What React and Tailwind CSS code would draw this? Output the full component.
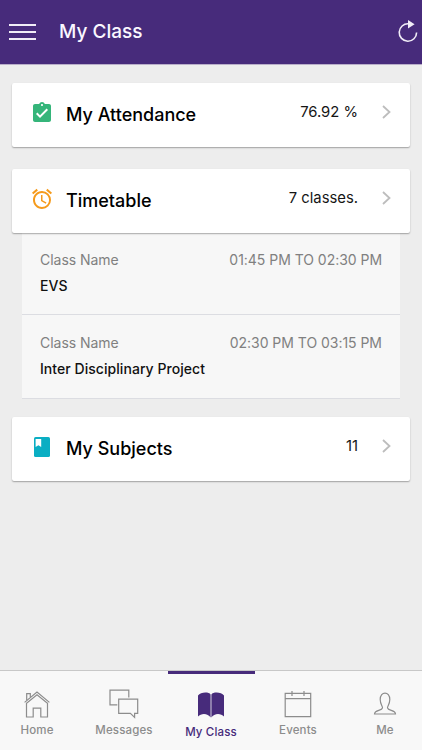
import React from "react";
import { MdAlarm, MdAssignmentTurnedIn } from "react-icons/md";

const classes = [
  { name: "EVS", time: "01:45 PM TO 02:30 PM" },
  { name: "Inter Disciplinary Project", time: "02:30 PM TO 03:15 PM" },
];

const BookIcon = () => (
  <svg className="size-6" viewBox="0 0 24 24">
    <rect x="4" y="2" width="16" height="20" rx="1.6" fill="#0aaec3" />
    <path d="M5.6 4h5.6v8l-2.8-1.8L5.6 12z" fill="#fff" />
  </svg>
);

const Chevron = () => (
  <svg
    className="ml-[23px] h-4 w-[11px]"
    viewBox="0 0 11 16"
    fill="none"
    stroke="#bdbdbd"
    strokeWidth="1.8"
  >
    <path d="M2 2l6.5 6L2 14" />
  </svg>
);

const HomeIcon = () => (
  <svg className="size-8" viewBox="0 0 32 32" fill="none" stroke="currentColor" strokeWidth="1.2">
    <path d="M5.5 15.2V29h6.7v-8.8h7.6V29h6.7V15.2L16 6.8z" />
    <path d="M3.6 14.4L16 4l12.4 10.4" />
    <path d="M5.7 12V5.6h3.6v3.3" />
  </svg>
);

const MessagesIcon = () => (
  <svg className="size-8" viewBox="0 0 32 32" fill="none" stroke="currentColor" strokeWidth="1.2">
    <path d="M20.8 9.5V2.2H2v14.6h7.3" />
    <path d="M10.7 11.1h19v14.3h-3.1v4l-4.2-4H10.7z" />
  </svg>
);

const ClassIcon = () => (
  <svg className="size-8" viewBox="0 0 32 32" fill="currentColor">
    <path d="M15.6 6.5C14 3.8 5.5 3.8 3 7.6v20.8c3-3.4 10-3.6 12.6 1.2z" />
    <path d="M16.4 6.5C18 3.8 26.5 3.8 29 7.6v20.8c-3-3.4-10-3.6-12.6 1.2z" />
  </svg>
);

const EventsIcon = () => (
  <svg className="size-8" viewBox="0 0 32 32" fill="none" stroke="currentColor" strokeWidth="1.2">
    <path d="M3.2 5.4h25.5v23.2H3.2zM3.2 10.6h25.5M10 2.9v5.2M22 2.9v5.2" />
  </svg>
);

const MeIcon = () => (
  <svg className="size-8" viewBox="0 0 32 32" fill="none" stroke="currentColor" strokeWidth="1.2">
    <path d="M5.500 26c0-4.100 7.400-3 8-6.100.3-1.600-2.300-3.300-2.300-8.300 0-8.700 9.600-8.700 9.600 0 0 5-2.600 6.700-2.300 8.300.6 3.100 8 2 8 6.100z" />
  </svg>
);

const tabs = [
  { label: "Home", icon: HomeIcon },
  { label: "Messages", icon: MessagesIcon },
  { label: "My Class", icon: ClassIcon, active: true },
  { label: "Events", icon: EventsIcon },
  { label: "Me", icon: MeIcon },
];

const Card = ({ icon, title, value }) => (
  <div className="relative flex h-16 items-center rounded-[2px] bg-white pl-[18px] pr-[18px] shadow-[0_1px_1.5px_rgba(0,0,0,0.32)]">
    <div className="flex size-6 -translate-y-[2px]">{icon}</div>
    <h2 className="ml-3 text-[18px] leading-6 font-medium text-black">
      {title}
    </h2>
    <div className="mb-[6px] ml-auto flex items-center">
      <span className="text-[14.8px] leading-5 text-[#151515]">{value}</span>
      <Chevron />
    </div>
  </div>
);

const App = () => {
  return (
    <div className="flex h-[750px] w-[422px] flex-col overflow-hidden bg-[#ededed] font-['Inter',sans-serif]">
      <header className="flex h-[65px] items-center border-b border-[#b9aec9] bg-[#472b7b] pl-[9px] pr-[4px]">
        <div className="flex w-[27px] flex-col gap-[5px]">
          <div className="h-[2px] bg-[#f1edf7]" />
          <div className="h-[2px] bg-[#f1edf7]" />
          <div className="h-[2px] bg-[#f1edf7]" />
        </div>
        <h1 className="ml-[23px] text-[19px] leading-6 font-medium text-[#faf7ff]">
          My Class
        </h1>
        <svg className="ml-auto h-6 w-[21px]" viewBox="0 0 21 24" fill="none">
          <path
            d="M11.5 3.8A8.7 8.7 0 1 0 19.6 12.5"
            stroke="#f1edf7"
            strokeWidth="1.6"
          />
          <path d="M11 0l6.600 4.200L11 8.400z" fill="#f1edf7" />
        </svg>
      </header>

      <main className="flex-1 px-3 pt-[18px]">
        <Card
          icon={<MdAssignmentTurnedIn size={24} color="#35b57a" />}
          title="My Attendance"
          value="76.92 %"
        />
        <div className="mt-[22px]">
          <Card
            icon={<MdAlarm size={24} color="#f59a1b" />}
            title="Timetable"
            value="7 classes."
          />
        </div>
        <div className="mx-[10px]">
          {classes.map((item) => (
            <div
              key={item.name}
              className="h-[82px] border-b border-[#dcdde2] bg-[#f7f7f7] px-[18px] pt-[17px] last:h-[84px] last:pt-[18px]"
            >
              <div className="flex justify-between text-[14px] leading-5 tracking-[-0.03px] text-[#808080]">
                <span>Class Name</span>
                <span>{item.time}</span>
              </div>
              <p className="mt-[6px] text-[14px] leading-5 font-medium tracking-[0.05px] text-[#111]">
                {item.name}
              </p>
            </div>
          ))}
        </div>
        <div className="mt-[18px]">
          <Card icon={<BookIcon />} title="My Subjects" value="11" />
        </div>
      </main>

      <nav className="flex h-20 justify-center border-t border-[#c8c8c8] bg-[#f8f8f8]">
        {tabs.map(({ label, icon: Icon, active }) => (
          <div
            key={label}
            className={
              active
                ? "flex w-[87px] shrink-0 flex-col items-center border-t-3 border-[#472b7b] pt-[14px] text-[#472b7b]"
                : "flex w-[87px] shrink-0 flex-col items-center pt-[16.5px] text-[#8c8c8c]"
            }
          >
            <Icon />
            <span
              className={
                active
                  ? "mt-1 text-[11.5px] leading-4 font-medium tracking-[0.15px]"
                  : "mt-[2.500px] text-[11.5px] leading-4 font-medium tracking-[0.15px]"
              }
            >
              {label}
            </span>
          </div>
        ))}
      </nav>
    </div>
  );
};

export default App;
